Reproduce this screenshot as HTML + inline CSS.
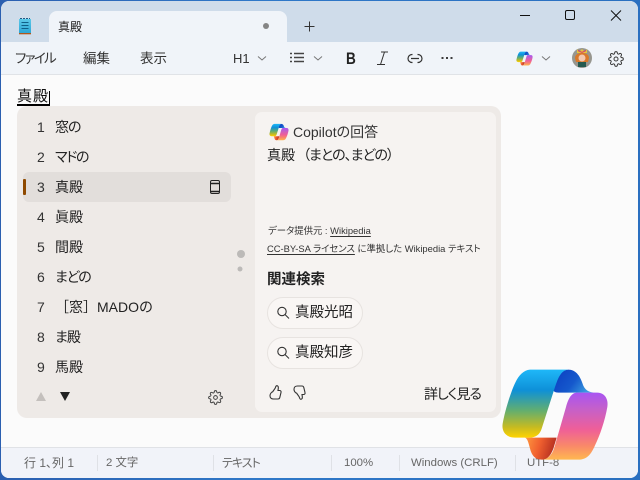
<!DOCTYPE html>
<html lang="ja"><head><meta charset="utf-8"><style>
html,body{margin:0;padding:0}
body{width:640px;height:480px;overflow:hidden;position:relative;background:linear-gradient(90deg,#2b5fb0,#2f78c8 40%,#2a6fc0);font-family:"Liberation Sans","Noto Sans CJK JP",sans-serif;color:#1c1c1c;font-feature-settings:"palt"}
.a{position:absolute;white-space:nowrap;line-height:20px}
svg{position:absolute;overflow:visible}
#w{position:absolute;left:1px;top:1px;width:637px;height:477px;border-radius:8px;overflow:hidden;background:#fbfbfb}
#w>*{margin-left:-1px;margin-top:-1px}
.n{left:37px;font-size:14px;color:#333}
.t{left:55px;font-size:14px;color:#222}
.s{top:453px;font-size:11.400px;color:#666}
.d{position:absolute;top:455px;width:1px;height:16px;background:#dfe1e6}
.pill{position:absolute;left:267px;width:94px;height:30px;border:1px solid #e7e3e0;border-radius:16px;background:#f9f6f4}
u{text-decoration-thickness:1px;text-underline-offset:2px}
</style></head><body>
<svg width="0" height="0" style="position:absolute"><defs>
<linearGradient id="g0" x1="0" y1="0" x2="0" y2="1"><stop offset="0" stop-color="#5cc8e8"/><stop offset="1" stop-color="#2ca6d6"/></linearGradient>
<linearGradient id="g1" x1="0" y1="0" x2="0" y2="1"><stop offset="0" stop-color="#1fb8f8"/><stop offset=".3" stop-color="#0e90d8"/><stop offset=".6" stop-color="#62ae70"/><stop offset=".85" stop-color="#c8bb20"/><stop offset="1" stop-color="#ffd400"/></linearGradient>
<linearGradient id="g2" x1="0" y1="0" x2="1" y2=".4"><stop offset="0" stop-color="#0a3cc0"/><stop offset=".6" stop-color="#1558cc"/><stop offset="1" stop-color="#3a9be0"/></linearGradient>
<linearGradient id="g3" x1="0" y1="0" x2="0" y2="1"><stop offset="0" stop-color="#a854f2"/><stop offset=".25" stop-color="#c660c8"/><stop offset=".55" stop-color="#ef5f98"/><stop offset=".8" stop-color="#f98a68"/><stop offset="1" stop-color="#ffb850"/></linearGradient>
<linearGradient id="g4" x1="0" y1="0" x2="1" y2=".2"><stop offset="0" stop-color="#ff9a40"/><stop offset=".5" stop-color="#f0602f"/><stop offset="1" stop-color="#b52f20"/></linearGradient>
<symbol id="cp" viewBox="30 20 330 285">
<path fill="url(#g2)" d="M235 28C258 28 270 48 277 68C283 88 295 97 318 97H205C192 97 186 90 190 80C200 50 215 28 235 28Z"/>
<path fill="url(#g4)" d="M105 232H200L190 265C180 290 170 298 155 298C135 298 125 285 120 265C115 245 112 235 105 232Z"/>
<path fill="url(#g1)" d="M120 28H237C215 28 205 50 195 80L155 205C150 222 138 232 118 232H75C50 232 34 215 38 190C45 150 60 105 70 80C80 55 95 30 120 28Z"/>
<path fill="url(#g3)" d="M262 97H322C345 97 356 118 352 140C345 180 330 225 315 255C303 283 290 298 265 298H155C175 298 187 280 192 265L228 140C236 112 245 97 262 97Z"/>
</symbol>
<symbol id="gear" viewBox="0 0 24 24"><g fill="none" stroke="#3a3a3a" stroke-width="1.500"><circle cx="12" cy="12" r="3"/><path d="M19.4 15a1.65 1.65 0 00.33 1.82l.06.06a2 2 0 010 2.83 2 2 0 01-2.83 0l-.06-.06a1.65 1.65 0 00-1.82-.33 1.65 1.65 0 00-1 1.51V21a2 2 0 01-2 2 2 2 0 01-2-2v-.09A1.65 1.65 0 009 19.4a1.65 1.65 0 00-1.82.33l-.06.06a2 2 0 01-2.83 0 2 2 0 010-2.83l.06-.06a1.65 1.65 0 00.33-1.82 1.65 1.65 0 00-1.51-1H3a2 2 0 01-2-2 2 2 0 012-2h.09A1.65 1.65 0 004.6 9a1.65 1.65 0 00-.33-1.82l-.06-.06a2 2 0 010-2.83 2 2 0 012.83 0l.06.06a1.65 1.65 0 001.82.33H9a1.65 1.65 0 001-1.51V3a2 2 0 012-2 2 2 0 012 2v.09a1.65 1.65 0 001 1.51 1.65 1.65 0 001.82-.33l.06-.06a2 2 0 012.83 0 2 2 0 010 2.83l-.06.06a1.65 1.65 0 00-.33 1.82V9a1.65 1.65 0 001.51 1H21a2 2 0 012 2 2 2 0 01-2 2h-.09a1.65 1.65 0 00-1.51 1z"/></g></symbol>
</defs></svg>
<div id="w">
<div style="position:absolute;left:0;top:0;width:640px;height:42px;background:#cfdcea"></div>
<div style="position:absolute;left:49px;top:11px;width:238px;height:31px;background:#f0f4f9;border-radius:8px 8px 0 0"></div>
<div style="position:absolute;left:0;top:42px;width:640px;height:32px;background:#f0f4f9"></div>
<div style="position:absolute;left:0;top:74px;width:640px;height:1px;background:#e0e3e7"></div>
<div style="position:absolute;left:0;top:447px;width:640px;height:1px;background:#e0e2e6"></div>
<div style="position:absolute;left:0;top:448px;width:640px;height:32px;background:#f1f3f9"></div>

<svg style="left:0;top:0" width="640" height="480" fill="none">
<rect x="19" y="19" width="12" height="14" fill="url(#g0)"/><rect x="19" y="33" width="12" height="1.300" fill="#b0581c"/>
<path d="M20 18.500h10" stroke="#1f5c86" stroke-dasharray="2 1"/>
<path d="M21.500 22.500h7M21.500 25.500h7M21.500 28.500h7" stroke="#0f5f88" stroke-width="1.100"/>
<circle cx="266" cy="26" r="3" fill="#858585"/>
<path d="M304.500 26.500h10M309.500 21.500v10" stroke="#333" stroke-width="1"/>
<path d="M520 15.500h10" stroke="#111" stroke-width="1"/>
<rect x="565.500" y="10.500" width="9" height="9" rx="1.500" stroke="#111"/>
<path d="M611 10.500l10 10M621 10.500l-10 10" stroke="#111"/>
<path d="M258 56.500l4 3.500 4-3.500M314 56.500l4 3.500 4-3.500M542 56.500l4 3.500 4-3.500" stroke="#777"/>
<path d="M294 53.500h10M294 57.500h10M294 61.500h10M290 53.500h2M290 57.500h2M290 61.500h2" stroke="#444" stroke-width="1.500"/>
<path d="M381 52h7M377 64.500h8M384.500 52l-4 12.500" stroke="#333"/>
<path d="M412.500 54.500h-.5a4 4 0 000 8h.5M417.500 54.500h.5a4 4 0 010 8h-.5M411 58.500h8" stroke="#333" stroke-width="1.200"/>
<path d="M441.500 58h2M446 58h2M450.500 58h2" stroke="#222" stroke-width="1.800"/>
<circle cx="582" cy="58" r="10" fill="#97968f"/>
<path d="M575 58c0-7 14-7 14 0l-1 4h-12z" fill="#d9782a"/>
<path d="M577 49l2 3 3-3 3 3 2-3v4h-10z" fill="#e5c53a"/>
<circle cx="582" cy="58" r="3.500" fill="#f3c8b0"/>
<rect x="578" y="62" width="8" height="5" fill="#255a50"/>
<path d="M578 50.500l4 2 4-2" stroke="#d9406a"/>
</svg>
<svg style="left:516px;top:50.500px" width="17" height="15"><use href="#cp" width="17" height="15"/></svg>
<svg style="left:608px;top:50.500px" width="16" height="16"><use href="#gear" width="16" height="16"/></svg>

<div class="a" style="left:58px;top:16.500px;font-size:12px">真殿</div>
<div class="a" style="left:15px;top:49px;font-size:13.500px;letter-spacing:-1.700px;color:#333">ファイル</div>
<div class="a" style="left:83px;top:49px;font-size:13.500px;color:#333">編集</div>
<div class="a" style="left:140px;top:49px;font-size:13.500px;color:#333">表示</div>
<div class="a" style="left:233px;top:49px;font-size:13px;color:#333">H1</div>
<div class="a" style="left:345.500px;top:49px;font-size:17px;font-weight:700;color:#222;transform:scaleX(.8);transform-origin:left">B</div>

<div class="a" style="left:17px;top:87px;font-size:15px;letter-spacing:1px;color:#111;font-feature-settings:normal">真殿</div>
<div style="position:absolute;left:17px;top:104px;width:33px;height:1.500px;background:#000"></div>
<div style="position:absolute;left:49px;top:91px;width:1px;height:14px;background:#000"></div>

<div style="position:absolute;left:17px;top:106px;width:484px;height:312px;background:#eeeae7;border-radius:10px"></div>
<div style="position:absolute;left:255px;top:112px;width:241px;height:300px;background:#f6f3f1;border-radius:7px"></div>
<div style="position:absolute;left:23px;top:172px;width:208px;height:30px;background:#e2dedb;border-radius:6px"></div>
<div style="position:absolute;left:23px;top:179px;width:3px;height:16px;background:#8f4a00;border-radius:1px"></div>
<svg style="left:0;top:0" width="640" height="480" fill="none">
<rect x="210.500" y="180.500" width="9" height="13" rx="1.500" stroke="#222"/>
<path d="M211 183.500h8M211 191.500h8" stroke="#222" stroke-width="1.400"/>
<circle cx="241" cy="254" r="4" fill="#bcbab8"/><circle cx="240" cy="269" r="2.500" fill="#bcbab8"/>
<path d="M41 392l5 9H36z" fill="#c4c0bd"/><path d="M60 392h10l-5 9z" fill="#222"/>
</svg>
<svg style="left:207.500px;top:389.500px" width="15" height="15"><use href="#gear" width="15" height="15"/></svg>

<div class="a n" style="top:117px">1</div><div class="a t" style="top:117px;letter-spacing:-1px">窓の</div>
<div class="a n" style="top:147px">2</div><div class="a t" style="top:147px;letter-spacing:-1.300px">マドの</div>
<div class="a n" style="top:177px">3</div><div class="a t" style="top:177px">真殿</div>
<div class="a n" style="top:207px">4</div><div class="a t" style="top:207px">眞殿</div>
<div class="a n" style="top:237px">5</div><div class="a t" style="top:237px">間殿</div>
<div class="a n" style="top:267px">6</div><div class="a t" style="top:267px;letter-spacing:-1.300px">まどの</div>
<div class="a n" style="top:297px">7</div><div class="a t" style="top:297px;font-feature-settings:normal">［窓］MADOの</div>
<div class="a n" style="top:327px">8</div><div class="a t" style="top:327px;letter-spacing:-1px">ま殿</div>
<div class="a n" style="top:357px">9</div><div class="a t" style="top:357px">馬殿</div>

<svg style="left:269px;top:123px" width="20" height="18"><use href="#cp" width="20" height="18"/></svg>
<div class="a" style="left:293px;top:122px;font-size:14px;color:#333">Copilotの回答</div>
<div class="a" style="left:267px;top:145px;font-size:14px;color:#222">真殿<span style="margin-left:8px;letter-spacing:-1px">（まとの、まどの）</span></div>
<div class="a" style="left:268px;top:221px;font-size:9.400px;color:#333">データ提供元 : <u>Wikipedia</u></div>
<div class="a" style="left:267px;top:239px;font-size:9.400px;color:#333"><u>CC-BY-SA ライセンス</u> に準拠した Wikipedia テキスト</div>
<div class="a" style="left:267px;top:270px;font-size:14.500px;font-weight:700;color:#222">関連検索</div>
<div class="pill" style="top:297px"></div><div class="pill" style="top:337px"></div>
<div class="a" style="left:295px;top:303px;font-size:14.500px;color:#222">真殿光昭</div>
<div class="a" style="left:295px;top:343px;font-size:14.500px;color:#222">真殿知彦</div>
<svg style="left:0;top:0" width="640" height="480" fill="none"><g stroke="#333" stroke-width="1.100">
<circle cx="282" cy="311.500" r="4.200"/><path d="M285 314.500l4 4"/>
<circle cx="282" cy="351.500" r="4.200"/><path d="M285 354.500l4 4"/>
<path d="M272.500 392l2.500-3.500c.6-1 .6-2.800 1.800-2.800 1.300 0 1.700 1.200 1.500 2.600l-.3 2.200h1.800c1 0 1.500 1 1.200 2l-1.200 5c-.2.8-.8 1.500-1.800 1.500h-4.500c-2 0-3.500-1.200-3.500-3.200 0-1.500.8-2.800 2-3.800z"/>
<path transform="translate(24 785) scale(1 -1)" d="M272.500 392l2.500-3.500c.6-1 .6-2.800 1.800-2.800 1.300 0 1.700 1.200 1.500 2.600l-.3 2.200h1.800c1 0 1.500 1 1.200 2l-1.200 5c-.2.8-.8 1.500-1.800 1.500h-4.500c-2 0-3.500-1.200-3.500-3.200 0-1.500.8-2.800 2-3.800z"/>
</g></svg>
<div class="a" style="left:424px;top:384px;font-size:14px;letter-spacing:-1px;color:#222">詳しく見る</div>

<div class="a s" style="left:24px;font-size:12px">行 1、列 1</div><div class="d" style="left:97px"></div>
<div class="a s" style="left:106px">2 文字</div><div class="d" style="left:213px"></div>
<div class="a s" style="left:222px;letter-spacing:-1px;font-size:12px">テキスト</div><div class="d" style="left:331px"></div>
<div class="a s" style="left:344px">100%</div><div class="d" style="left:399px"></div>
<div class="a s" style="left:411px">Windows (CRLF)</div><div class="d" style="left:515px"></div>
<div class="a s" style="left:527px">UTF-8</div>
</div>
<svg style="left:500px;top:366.670px" width="110" height="95"><use href="#cp" width="110" height="95"/></svg>
</body></html>
